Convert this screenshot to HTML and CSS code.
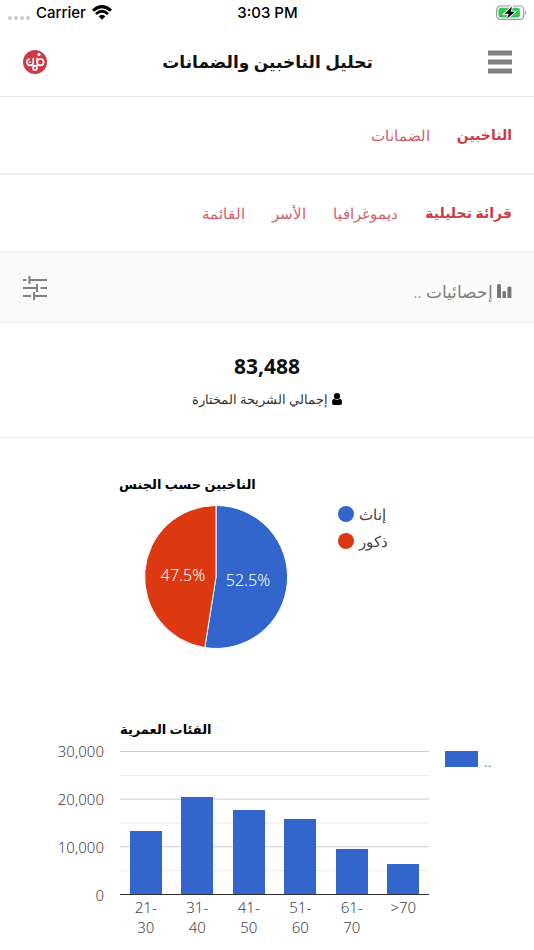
FILE: index.html
```html
<!DOCTYPE html>
<html lang="ar" dir="rtl">
<head>
<meta charset="utf-8">
<meta name="viewport" content="width=device-width, initial-scale=1">
<title>تحليل الناخبين والضمانات</title>
<link rel="stylesheet" href="styles.css">
</head>
<body>
<div class="status" dir="ltr">
  <div class="carrier">
    <span class="signal"><i></i><i></i><i></i><i></i></span>
    <span>Carrier</span>
    <svg width="20" height="16" viewBox="0 0 20 16" aria-hidden="true">
      <path d="M1 5.6Q10-2.4 19 5.6" fill="none" stroke="#000" stroke-width="3"/>
      <path d="M4 9Q10 3.6 16 9" fill="none" stroke="#000" stroke-width="2.8"/>
      <path d="M6.6 11.2Q10 8.2 13.4 11.2L10 14.8Z"/>
    </svg>
  </div>
  <span>3:03 PM</span>
  <div class="battery">
    <svg width="31" height="16" viewBox="0 0 31 16" aria-hidden="true">
      <rect x=".7" y="1" width="27" height="13.4" rx="4" fill="none" stroke="#999" stroke-width="1.2"/>
      <rect x="2.5" y="2.8" width="21.4" height="9.8" rx="2.4" fill="#33c759"/>
      <path d="M29.2 5.6Q31 7.7 29.2 9.8Z" fill="#888"/>
      <path d="M16.2 1.4L8.6 8.7H12.8L10.8 14L18.8 6.8H14.6Z" stroke="#fff" stroke-width="2" paint-order="stroke"/>
    </svg>
  </div>
</div>

<header class="header">
  <button class="icon-button" aria-label="القائمة">
    <svg width="24" height="24" viewBox="0 0 24 24"><path d="M0 .5H24V5.5H0ZM0 9.5H24V14.5H0ZM0 18.5H24V23.5H0Z" fill="#808080"/></svg>
  </button>
  <h1>تحليل الناخبين والضمانات</h1>
  <a class="logo" href="#" aria-label="الرئيسية">
    <svg width="24" height="24" viewBox="0 0 24 24">
      <circle cx="12" cy="12" r="12" fill="#cb3a45"/>
      <circle cx="16" cy="4.4" r="1.6" fill="#fff"/>
      <circle cx="7" cy="12.2" r=".9" fill="#fff"/>
      <g fill="none" stroke="#fff" stroke-width="1.7" stroke-linecap="round">
        <path d="M6 9.2A3.2 3.2 0 1 0 10.3 12.2V8.6"/>
        <circle cx="17.4" cy="12.2" r="3.2"/>
        <path d="M14.2 8.4V12.2"/>
        <path d="M8.4 15.4Q10 15 12 15.8Q14 15 15.8 15.4"/>
        <circle cx="12" cy="18" r="2"/>
      </g>
    </svg>
  </a>
</header>

<nav class="tabs">
  <a class="active" href="#">الناخبين</a>
  <a href="#">الضمانات</a>
</nav>
<nav class="tabs">
  <a class="active" href="#">قرائة تحليلية</a>
  <a href="#">ديموغرافيا</a>
  <a href="#">الأسر</a>
  <a href="#">القائمة</a>
</nav>

<div class="band">
  <h2>
    <svg width="15" height="15" viewBox="0 0 15 15" aria-hidden="true"><path d="M0 1Q0 0 2 0T4 1V14H0ZM5.4 8Q5.4 7 7.2 7T9 8V14H5.4ZM10.4 3.5Q10.4 2.5 12.4 2.5T14.4 3.5V14H10.4Z" fill="#777"/></svg>
    إحصائيات ..
  </h2>
  <button class="icon-button" aria-label="تصفية">
    <svg width="24" height="24" viewBox="0 0 24 24"><path d="M0 4H3.5M6.5 0V8M6.5 4H24M0 12H14M14 8V16M17.5 12H24M0 20H8M11 16V24M11 20H24" fill="none" stroke="#808080" stroke-width="2"/></svg>
  </button>
</div>

<section class="total">
  <strong>83,488</strong>
  <p>
    <svg width="10" height="12" viewBox="0 0 10 12" aria-hidden="true"><circle cx="5" cy="3.2" r="3.1"/><path d="M2 5.8Q5 8 8 5.8Q10 6.4 10 10Q10 12 8 12H2Q0 12 0 10Q0 6.4 2 5.8Z"/></svg>
    إجمالي الشريحة المختارة
  </p>
</section>

<main class="charts" dir="ltr">
  <section class="chart pie-chart">
    <h3 dir="rtl">الناخبين حسب الجنس</h3>
    <svg class="pie" width="144" height="144" viewBox="0 0 144 144" role="img" aria-label="الناخبين حسب الجنس">
      <path d="M72 72V.5A71.5 71.5 0 1 1 60.8 142.6Z" fill="#3366cc" stroke="#fff"/>
      <path d="M72 72L60.8 142.6A71.5 71.5 0 0 1 72 .5Z" fill="#dc3912" stroke="#fff"/>
      <text x="104" y="81">52.5%</text>
      <text x="39" y="76">47.5%</text>
    </svg>
    <ul class="legend">
      <li><i class="dot women"></i>إناث</li>
      <li><i class="dot men"></i>ذكور</li>
    </ul>
  </section>

  <section class="chart bar-chart">
    <h3 dir="rtl">الفئات العمرية</h3>
    <div class="axis"><span>30,000</span><span>20,000</span><span>10,000</span><span>0</span></div>
    <div class="plot">
      <i style="height:44.3%"></i><i style="height:68%"></i><i style="height:59%"></i><i style="height:52.4%"></i><i style="height:31.3%"></i><i style="height:20.8%"></i>
    </div>
    <div class="key"><i></i>..</div>
    <div class="labels"><span>21-<br>30</span><span>31-<br>40</span><span>41-<br>50</span><span>51-<br>60</span><span>61-<br>70</span><span>&gt;70</span></div>
  </section>
</main>
</body>
</html>
```
FILE: styles.css
```css
* { box-sizing: border-box; }
body {
  margin: 0;
  background: #fff;
  color: #111;
  font: 300 15px/24px "Noto Sans", "DejaVu Sans", sans-serif;
}
h1, h2, h3, p, ul { margin: 0; padding: 0; }
a { color: inherit; text-decoration: none; }
svg { display: block; flex: none; }
.icon-button { padding: 0; border: 0; background: none; }

.status {
  display: grid;
  grid-template-columns: 1fr auto 1fr;
  align-items: center;
  height: 26px;
  padding: 0 7px 0 8px;
  color: #000;
  font: 500 15px/26px Inter, sans-serif;
}
.carrier { display: flex; align-items: center; gap: 6px; }
.signal { display: flex; gap: 2px; padding-top: 10px; }
.signal i { width: 4px; height: 4px; border-radius: 50%; background: #ccc; }
.battery { display: flex; justify-content: flex-end; }

.header, .band {
  display: flex;
  align-items: center;
  justify-content: space-between;
  padding: 0 22px 0 23px;
}
.header { height: 71px; padding-top: 2px; border-bottom: 1px solid #e8e8e8; }
h1 { font-size: 17px; font-weight: 700; }

.tabs {
  display: flex;
  align-items: center;
  gap: 27px;
  height: 78px;
  padding: 0 22px;
  border-bottom: 2px solid #f0f0f0;
  color: #d4606a;
}
.tabs .active { color: #cb3a45; font-size: 14px; font-weight: 700; }

.band { height: 70px; background: #fafafa; border-bottom: 1px solid #e8e8e8; }
h2 {
  display: flex;
  align-items: center;
  gap: 4px;
  padding-top: 8px;
  color: #808080;
  font-size: 17px;
  font-weight: 300;
}

.total {
  display: flex;
  flex-direction: column;
  align-items: center;
  gap: 8px;
  height: 115px;
  padding-top: 30px;
  border-bottom: 1px solid #e8e8e8;
}
.total strong { font-size: 21px; font-weight: 700; line-height: 26px; }
.total p { display: flex; align-items: center; gap: 4px; color: #333; font-size: 13px; }

.chart { display: grid; }
h3 { justify-self: start; color: #000; font-size: 13px; font-weight: 700; }
.pie-chart {
  grid-template-columns: 25px 144px auto 1fr;
  row-gap: 9px;
  padding: 34px 0 0 119px;
}
.pie-chart h3 { grid-column: 1 / -1; }
.pie { grid-column: 2; }
.pie text { fill: #fff; font-size: 16px; text-anchor: middle; }
.legend {
  grid-column: 3;
  margin-top: -5px;
  padding-left: 50px;
  color: #444;
  list-style: none;
}
.legend li { display: flex; align-items: center; gap: 5px; height: 27px; }
.dot { width: 16px; height: 16px; border-radius: 50%; }
.women { background: #3366cc; }
.men { background: #dc3912; }

.bar-chart {
  grid-template-columns: 104px minmax(0, 1fr) 89px;
  column-gap: 16px;
  padding-top: 68px;
  color: #444;
  line-height: 20px;
}
.bar-chart h3 { grid-column: 2 / 4; margin-bottom: 10px; line-height: 24px; }
.axis {
  display: flex;
  flex-direction: column;
  justify-content: space-between;
  margin: -10px 0;
  text-align: right;
}
.plot {
  display: grid;
  grid-template-columns: repeat(6, 1fr);
  align-items: end;
  justify-items: center;
  height: 144px;
  border-bottom: 1px solid #333;
  background:
    linear-gradient(#ccc 1px, transparent 1px) 0 0 / 100% 33.3%,
    linear-gradient(#ebebeb 1px, transparent 1px) 0 24px / 100% 33.3%;
}
.plot i { width: 62%; background: #3366cc; }
.key { display: flex; gap: 6px; }
.key i { width: 33px; height: 16px; background: #3366cc; }
.labels {
  display: grid;
  grid-column: 2;
  grid-template-columns: repeat(6, 1fr);
  padding-top: 2px;
  text-align: center;
}
```
